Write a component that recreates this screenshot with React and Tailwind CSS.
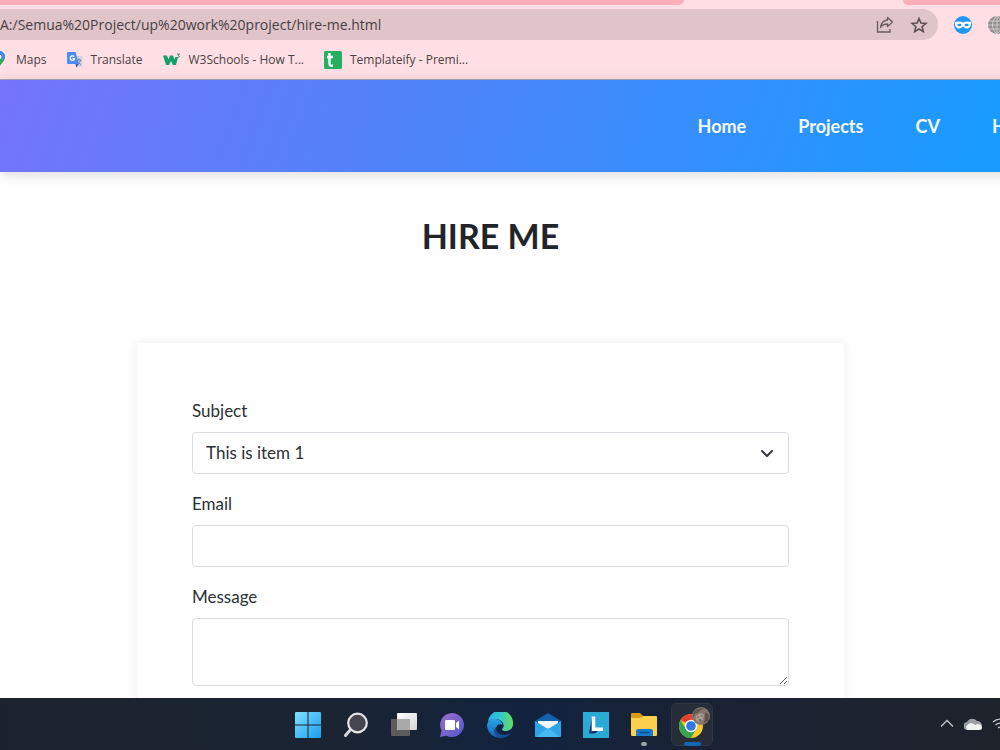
function MapsIcon() {
    return (
        <svg viewBox="0 0 18 18" className="w-[18px] h-[18px] shrink-0">
            <path d="M9 0a6 6 0 0 0-6 6c0 5 5 6 6 12 1-6 6-7 6-12a6 6 0 0 0-6-6Z" fill="#34a853" />
            <path d="M9 0c3 0 6 2.500 6 6l-3 3-5-5Z" fill="#4285f4" />
            <circle cx="9" cy="6" r="2.500" fill="#fff" />
        </svg>
    );
}

function TranslateIcon() {
    return (
        <svg viewBox="0 0 16 16" className="w-4 h-4 shrink-0">
            <path d="M6 4h8.500a1 1 0 0 1 1 1v9a1 1 0 0 1-1 1H9Z" fill="#d5d5dd" />
            <path d="M9 8h5.500M12 6.500V8M13.500 8c-.5 2-2 3.500-4 4.500M10.500 9.500c.8 1.400 2 2.400 3.500 3" stroke="#6b7fa8" fill="none" />
            <path d="M1 0h7.500L12 12H1a1 1 0 0 1-1-1V1a1 1 0 0 1 1-1Z" fill="#4c8bf5" />
            <path d="M8.500 12H12l-2.700 3.500Z" fill="#3a5bc4" />
            <path d="M7.300 4.700A2.300 2.300 0 1 0 7.700 6.600H5.400" stroke="#fff" strokeWidth="1.200" fill="none" />
        </svg>
    );
}

function SchoolsIcon() {
    return (
        <svg viewBox="0 0 18 14" className="w-[18px] h-[14px] shrink-0">
            <path d="M0 2.500h4l1.500 4L7 2.500h3l1.500 4 1-2.500H15l-2 8h-3L8 8l-2 4H3Z" fill="#15a06a" />
            <path d="M14 1h2.500L15 2.500c2 0 2 2.500-1 2" stroke="#15a06a" fill="none" />
        </svg>
    );
}

function TemplateifyIcon() {
    return (
        <svg viewBox="0 0 18 18" className="w-[18px] h-[18px] shrink-0">
            <rect width="18" height="18" rx="1.500" fill="#27ae60" />
            <path d="M5.500 2v10.500c0 2 1 2.500 3.500 2.200M3 6h6" stroke="#fff" strokeWidth="2.400" fill="none" />
        </svg>
    );
}

function ShareIcon() {
    return (
        <svg viewBox="0 0 18 18" className="w-[18px] h-[18px]" fill="none" stroke="#67595c" strokeWidth="1.300">
            <path d="M1.500 5v11h12.500v-3" />
            <path d="M11.500 1.500 16.500 6l-5 4.500V8C8 8 6 9 4.500 11.500 5 7.500 7.500 4.500 11.500 4Z" strokeLinejoin="round" />
        </svg>
    );
}

function StarIcon() {
    return (
        <svg viewBox="0 0 18 18" className="w-[18px] h-[18px]" fill="none" stroke="#5d5154" strokeWidth="1.600">
            <path d="m9 2.500 1.900 4.600 5 .4-3.800 3.200 1.200 4.900L9 13l-4.300 2.600 1.200-4.900-3.800-3.200 5-.4Z" />
        </svg>
    );
}

function MaskIcon() {
    return (
        <svg viewBox="0 0 18 18" className="w-[18px] h-[18px]">
            <circle cx="9" cy="9" r="9" fill="#2196f3" />
            <path d="M.8 6C4 5 7 5.300 9 6.500c2-1.200 5-1.500 8.200-.5.300 4-1.700 6.500-4.200 6.500-2 0-3-1.500-4-2-1 .5-2 2-4 2C2.500 12.500.5 10 .8 6Z" fill="#fff" />
            <ellipse cx="5.400" cy="9" rx="2.100" ry="1.300" fill="#2196f3" />
            <ellipse cx="12.600" cy="9" rx="2.100" ry="1.300" fill="#2196f3" />
        </svg>
    );
}

function GlobeIcon() {
    return (
        <svg viewBox="0 0 18 18" className="w-[18px] h-[18px]">
            <circle cx="9" cy="9" r="9" fill="#8f8f8f" />
            <path d="M9 0v18M1 5h16M0 9h18M1 13h16M9 0C3 5 3 13 9 18M9 0c6 5 6 13 0 18" stroke="#e3d5d7" strokeWidth="0.800" fill="none" />
        </svg>
    );
}

function WindowsIcon() {
    return (
        <svg viewBox="0 0 26 26" className="w-[26px] h-[26px]">
            <defs>
                <linearGradient id="win" x1="0" y1="0" x2="1" y2="1">
                    <stop offset="0" stopColor="#7fe0ff" />
                    <stop offset="1" stopColor="#1a9df0" />
                </linearGradient>
            </defs>
            <path d="M1 0h11.500v12.500H0V1a1 1 0 0 1 1-1ZM13.500 0H25a1 1 0 0 1 1 1v11.500H13.500ZM0 13.500h12.500V26H1a1 1 0 0 1-1-1ZM13.500 13.500H26V25a1 1 0 0 1-1 1H13.500Z" fill="url(#win)" />
        </svg>
    );
}

function SearchIcon() {
    return (
        <svg viewBox="0 0 26 26" className="w-[26px] h-[26px]">
            <path d="m8 17-5.500 6.500" stroke="#d8d8da" strokeWidth="3" strokeLinecap="round" />
            <circle cx="14.500" cy="11" r="9.300" fill="#46464f" stroke="#e6e6e8" strokeWidth="2.200" />
        </svg>
    );
}

function TaskViewIcon() {
    return (
        <svg viewBox="0 0 26 26" className="w-[26px] h-[26px]">
            <defs>
                <linearGradient id="pane" x1="0" y1="0" x2="1" y2="1">
                    <stop offset="0" stopColor="#ffffff" />
                    <stop offset="1" stopColor="#d4d4d4" />
                </linearGradient>
            </defs>
            <rect y="7" width="19" height="17" rx="1" fill="#5c5c5c" />
            <rect x="6" y="1" width="20" height="17" rx="1" fill="url(#pane)" />
            <path d="M6 7h13v11H6Z" fill="#a9a9a9" />
        </svg>
    );
}

function ChatIcon() {
    return (
        <svg viewBox="0 0 26 26" className="w-[26px] h-[26px]">
            <defs>
                <linearGradient id="chat" x1="0" y1="0" x2="1" y2="1">
                    <stop offset="0" stopColor="#a06cc4" />
                    <stop offset="1" stopColor="#4f5bd0" />
                </linearGradient>
            </defs>
            <path d="M13 1a12 12 0 1 1-5.500 22.700L1 25l1.500-6.500A12 12 0 0 1 13 1Z" fill="url(#chat)" />
            <rect x="6" y="8" width="10" height="10" rx="1" fill="#fff" />
            <path d="m17 11 3-2.500v9L17 15Z" fill="#fff" />
        </svg>
    );
}

function EdgeIcon() {
    return (
        <svg viewBox="0 0 26 26" className="w-[26px] h-[26px]">
            <defs>
                <linearGradient id="edge-top" x1="0" y1="0" x2="1" y2="0">
                    <stop offset="0.100" stopColor="#2bb3e8" />
                    <stop offset="0.500" stopColor="#35c5cc" />
                    <stop offset="1" stopColor="#66df57" />
                </linearGradient>
                <linearGradient id="edge-left" x1="0" y1="0" x2="0" y2="1">
                    <stop offset="0" stopColor="#2aa5e8" />
                    <stop offset="1" stopColor="#1163b5" />
                </linearGradient>
            </defs>
            <path d="M1 10A12.500 12.500 0 0 1 26 12c0 5-4 7-7.500 7-3 0-4.500-1.200-3-2.500C19 12 14 7 8 7 4 7 2 8.500 1 10Z" fill="url(#edge-top)" />
            <path d="M0 13C1 8 5 6.500 8.500 7c4 .5 7 3 7 6-3-2-7 0-6.500 5s6 8 8.500 7A13 13 0 0 1 0 13Z" fill="url(#edge-left)" />
            <path d="M9.200 15c-1 4 2.500 8 8 8 3 0 5-1 6.500-2-2 3.500-6 5.200-9.500 5C7 25 5 18 9.200 15Z" fill="#164f96" />
        </svg>
    );
}

function MailIcon() {
    return (
        <svg viewBox="0 0 26 26" className="w-[26px] h-[26px]">
            <path d="M0 9 13 1l13 8v5H0Z" fill="#1163b0" />
            <path d="M3 9h20v9H3Z" fill="#f3f6f8" />
            <path d="M0 9v15a1 1 0 0 0 1 1h24a1 1 0 0 0 1-1V9L13 17Z" fill="#2fa4e7" />
            <path d="m1 25 12-9 12 9Z" fill="#48b9f3" />
        </svg>
    );
}

function LIcon() {
    return (
        <svg viewBox="0 0 26 26" className="w-[26px] h-[26px]">
            <path d="M0 0h26v26H0Z" fill="#29abd6" />
            <path d="M9 5v14l-3 2.500Z" fill="#1d2f6f" />
            <path d="M6 21.500 9 19h6l-3 2.500Z" fill="#1d2f6f" />
            <path d="M10.500 4.500v12.700H20" stroke="#fff" strokeWidth="3.600" fill="none" />
        </svg>
    );
}

function FolderIcon() {
    return (
        <svg viewBox="0 0 26 26" className="w-[26px] h-[26px]">
            <path d="M0 2a1 1 0 0 1 1-1h8l3 3v6H0Z" fill="#d99b16" />
            <path d="M0 6h10l2-2h13a1 1 0 0 1 1 1v18a1 1 0 0 1-1 1H1a1 1 0 0 1-1-1Z" fill="#fdd04f" />
            <path d="M5 24v-5a2 2 0 0 1 2-2h13a2 2 0 0 1 2 2v5Z" fill="#1979ca" />
            <path d="M9 20.500h9" stroke="#0d4f93" strokeWidth="1.500" strokeLinecap="round" />
        </svg>
    );
}

function ChromeIcon() {
    return (
        <svg viewBox="0 0 32 32" className="w-8 h-8">
            <circle cx="13" cy="19" r="12" fill="#fbc927" />
            <path d="M13 19 2.600 13a12 12 0 0 1 20.800 0H13Z" fill="#e2412f" />
            <path d="M2.600 13 8 22l5 3-1 6A12 12 0 0 1 2.600 13Z" fill="#35a551" />
            <path d="M8 22 18.200 22 13 31A12 12 0 0 1 7 29Z" fill="#35a551" />
            <circle cx="13" cy="19" r="6.200" fill="#fff" />
            <circle cx="13" cy="19" r="4.800" fill="#2f78e8" />
            <circle cx="23" cy="9" r="9" fill="#85776d" />
            <path d="M15 6c2-4 8-6 12-4-3 0-6 2-7 4l-3 1-2 4Z" fill="#625954" />
            <path d="M18 9c2-3 6-3 8-1l-1 5-5 2c-2-1-3-4-2-6Z" fill="#a89b90" />
            <path d="m27 5 4 3-1 6-4 2 1-5Z" fill="#5b524d" />
            <path d="M19.500 10h1M23.500 9h1M21 13h2" stroke="#40332e" />
        </svg>
    );
}

const bookmarks = [
    { label: "Maps", icon: MapsIcon },
    { label: "Translate", icon: TranslateIcon },
    { label: "W3Schools - How T...", icon: SchoolsIcon },
    { label: "Templateify - Premi...", icon: TemplateifyIcon },
];

const links = ["Home", "Projects", "CV", "Hire Me"];

const apps = [
    { name: "Start", icon: WindowsIcon },
    { name: "Search", icon: SearchIcon },
    { name: "Task View", icon: TaskViewIcon },
    { name: "Chat", icon: ChatIcon },
    { name: "Edge", icon: EdgeIcon },
    { name: "Mail", icon: MailIcon },
    { name: "L", icon: LIcon },
    { name: "File Explorer", icon: FolderIcon, open: true },
    { name: "Chrome", icon: ChromeIcon, active: true },
];

function BrowserBar() {
    return (
        <div className="shrink-0 bg-[#ffdfe4] border-b border-[#a9a3b8] font-['Open_Sans',sans-serif] text-[#4a4044]">
            <div className="flex h-[5px]">
                <div className="flex-1 bg-[#ffaebb] rounded-br-md" />
                <div className="w-[219px]" />
                <div className="w-[97px] bg-[#ffaebb] rounded-bl-md" />
            </div>
            <div className="flex items-center mt-1 -mr-1.5">
                <div className="flex flex-1 items-center h-[31px] bg-[#dfc4c9] rounded-r-full pr-2.5">
                    <input
                        aria-label="Address"
                        defaultValue="A:/Semua%20Project/up%20work%20project/hire-me.html"
                        className="flex-1 min-w-0 bg-transparent outline-none text-sm"
                    />
                    <button aria-label="Share" className="mr-4">
                        <ShareIcon />
                    </button>
                    <button aria-label="Bookmark">
                        <StarIcon />
                    </button>
                </div>
                <button aria-label="Mask" className="ml-4">
                    <MaskIcon />
                </button>
                <button aria-label="Globe" className="ml-4">
                    <GlobeIcon />
                </button>
            </div>
            <div className="flex items-center gap-5 h-[39px] -ml-2.5">
                {bookmarks.map(({ label, icon: Icon }) => (
                    <a key={label} href="#" className="flex items-center gap-2 text-xs whitespace-nowrap">
                        <Icon />
                        {label}
                    </a>
                ))}
            </div>
        </div>
    );
}

function Navbar() {
    return (
        <nav className="relative flex shrink-0 items-center justify-end gap-[52px] h-[92px] -mr-[57px] pb-px bg-[linear-gradient(110deg,#7474f9,#4a86fb_45%,#1a9bff_92%)] shadow-[0_2px_12px_rgba(0,0,0,0.15)]">
            {links.map((link) => (
                <a key={link} href="#" className="text-lg font-bold text-[#f4f9ff] whitespace-nowrap">
                    {link}
                </a>
            ))}
        </nav>
    );
}

function HireForm() {
    return (
        <form className="w-full max-w-[707px] mt-[86px] px-[55px] py-[54px] bg-white shadow-[0_0_10px_rgba(0,0,0,0.06)]">
            <label htmlFor="subject" className="block mb-2">
                Subject
            </label>
            <div className="relative mb-4">
                <select
                    id="subject"
                    className="block w-full h-[42px] px-[13px] pb-px appearance-none bg-white border border-[#dadde1] rounded-sm"
                >
                    <option>This is item 1</option>
                </select>
                <svg
                    viewBox="0 0 16 16"
                    className="absolute right-[14px] top-[13px] w-4 h-4 pointer-events-none"
                    fill="none"
                    stroke="#343a40"
                    strokeWidth="2"
                    strokeLinecap="round"
                    strokeLinejoin="round"
                >
                    <path d="m3 6 5 5 5-5" />
                </svg>
            </div>
            <label htmlFor="email" className="block mb-2">
                Email
            </label>
            <input id="email" type="email" className="block w-full h-[42px] mb-4 px-3 border border-[#dadde1] rounded-sm" />
            <label htmlFor="message" className="block mb-2">
                Message
            </label>
            <textarea id="message" className="block w-full h-[68px] px-3 border border-[#dadde1] rounded-sm" />
        </form>
    );
}

function Taskbar() {
    return (
        <div className="relative grid grid-cols-[1fr_auto_1fr] shrink-0 items-center h-[52px] bg-[linear-gradient(to_right,#1b222d,#1a2433_35%,#12233f_52%,#1a2233_72%,#1e222b)]">
            <div />
            <div className="flex items-center">
                {apps.map(({ name, icon: Icon, open, active }) => (
                    <button
                        key={name}
                        aria-label={name}
                        className={`relative flex items-center justify-center w-12 h-[52px] pt-0.5 ${active ? "before:absolute before:inset-x-[3px] before:top-[5px] before:h-[43px] before:rounded-md before:bg-[#262c38] before:border before:border-[#303744]" : ""}`}
                    >
                        <span className={`relative ${active ? "pb-1 pl-1" : ""}`}>
                            <Icon />
                        </span>
                        {open && <span className="absolute bottom-1 w-1.5 h-1 rounded-full bg-[#9fa3aa]" />}
                        {active && <span className="absolute bottom-1 w-[17px] h-1 rounded-full bg-[#1266b4]" />}
                    </button>
                ))}
            </div>
            <div className="flex items-center justify-end gap-2.5 -mr-2 overflow-hidden">
                <svg viewBox="0 0 14 14" className="w-3.5 h-3.5 shrink-0" fill="none" stroke="#c4c6ca" strokeWidth="1.300">
                    <path d="m1 9.500 6-6 6 6" />
                </svg>
                <svg viewBox="0 0 18 14" className="w-[18px] h-3.5 shrink-0">
                    <path d="M4 13a4 4 0 0 1-1-8 6 6 0 0 1 10-1c3 0 5 2 5 5Z" fill="#9b9da2" />
                    <path d="M3.500 13a3 3 0 0 1 0-5C6 5.500 9 6 11 8c3-2 7-.5 7 2.500a2.500 2.500 0 0 1-2.500 2.500Z" fill="#f1f2f4" />
                </svg>
                <svg viewBox="0 0 16 16" className="w-4 h-4 shrink-0" fill="none" stroke="#c4c6ca" strokeWidth="1.300">
                    <path d="M1 6a10 10 0 0 1 14 0M3.500 9a6.500 6.500 0 0 1 9 0M6 12a3 3 0 0 1 4 0" />
                </svg>
            </div>
        </div>
    );
}

export default function App() {
    return (
        <div className="flex flex-col h-screen overflow-hidden bg-[#fefefe] font-[Lato,sans-serif] text-[17px] leading-[27px] text-[#2b3035]">
            <BrowserBar />
            <Navbar />
            <main className="flex flex-1 flex-col items-center min-h-0 overflow-hidden pt-[42px] pr-[19px]">
                <h1 className="text-[34px] leading-[43px] font-bold text-[#212529]">HIRE ME</h1>
                <HireForm />
            </main>
            <Taskbar />
        </div>
    );
}
